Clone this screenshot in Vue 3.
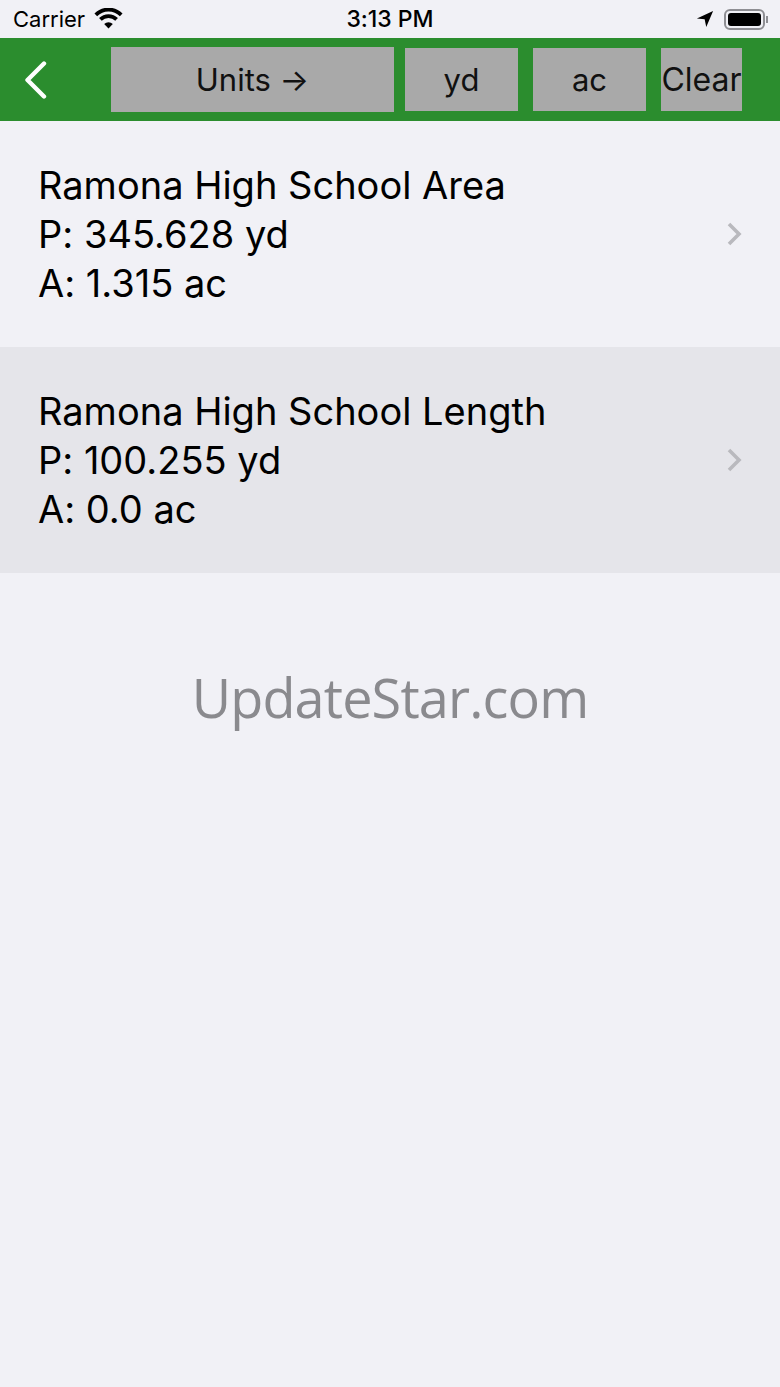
<script setup>
// Rader i listan
const rows = [
  { name: 'Ramona High School Area', p: '345.628 yd', a: '1.315 ac', active: false },
  { name: 'Ramona High School Length', p: '100.255 yd', a: '0.0 ac', active: true },
]
</script>

<template>
  <div class="page">
    <div class="status">
      <div class="status-left">
        <span class="carrier">Carrier</span>
        <svg class="wifi" width="29" height="21" viewBox="0 0 29 21">
          <path d="M1.8 6.8 A18 18 0 0 1 27.2 6.8" fill="none" stroke="#000" stroke-width="3.8" />
          <path d="M6.4 11.4 A11.5 11.5 0 0 1 22.6 11.4" fill="none" stroke="#000" stroke-width="3.8" />
          <path d="M14.5 20.5 L10.2 16 A6 6 0 0 1 18.8 16 Z" fill="#000" />
        </svg>
      </div>
      <span class="time">3:13 PM</span>
      <div class="status-right">
        <svg class="arrow" width="18" height="18" viewBox="0 0 20 20">
          <path d="M19 1 L1 9.4 L9.6 10.4 L11.4 19 Z" fill="#000" />
        </svg>
        <div class="battery"><div class="battery-fill"></div></div>
        <div class="battery-tip"></div>
      </div>
    </div>

    <div class="nav">
      <svg class="back" width="26" height="38" viewBox="0 0 26 38">
        <path d="M21 2.5 L4.5 19 L21 35.5" fill="none" stroke="#fff" stroke-width="4.4" stroke-linecap="round" stroke-linejoin="round" />
      </svg>
      <div class="btn units">Units →</div>
      <div class="btn yd">yd</div>
      <div class="btn ac">ac</div>
      <div class="btn clear">Clear</div>
    </div>

    <div v-for="row in rows" :key="row.name" class="row" :class="{ active: row.active }">
      <div class="row-text">
        <div>{{ row.name }}</div>
        <div>P: {{ row.p }}</div>
        <div>A: {{ row.a }}</div>
      </div>
      <svg class="chevron" width="16" height="26" viewBox="0 0 16 26">
        <path d="M3 3 L13 13 L3 23" fill="none" stroke="#b9b9be" stroke-width="3.6" />
      </svg>
    </div>

    <div class="watermark">UpdateStar.com</div>
  </div>
</template>

<style>
html, body {
  margin: 0;
  background: #f1f1f6;
}
</style>

<style scoped>
.page {
  width: 780px;
  height: 1387px;
  overflow: hidden;
  background: #f1f1f6;
  font-family: Inter, "Liberation Sans", sans-serif;
  font-feature-settings: "calt" 0;
  color: #000;
}
.status {
  height: 38px;
  display: grid;
  grid-template-columns: 1fr auto 1fr;
  align-items: center;
}
.status-left {
  display: flex;
  align-items: center;
  gap: 9px;
  padding-left: 13px;
}
.carrier {
  font-size: 22px;
}
.wifi {
  margin-top: -1px;
}
.time {
  font-weight: 500;
  font-size: 23px;
}
.status-right {
  display: flex;
  align-items: center;
  justify-content: flex-end;
  padding-right: 12px;
}
.arrow {
  margin-right: 10px;
}
.battery {
  width: 41px;
  height: 21px;
  border: 2px solid #8e8e93;
  border-radius: 6px;
  padding: 2px;
  box-sizing: border-box;
}
.battery-fill {
  width: 100%;
  height: 100%;
  background: #000;
  border-radius: 3px;
}
.battery-tip {
  width: 2px;
  height: 7px;
  margin-left: 1px;
  background: #8e8e93;
}
.nav {
  height: 83px;
  background: #2b8d2e;
  display: flex;
  align-items: center;
  padding-left: 23px;
  font-size: 31px;
}
.back {
  margin-right: 62px;
}
.btn {
  background: #a9a9a9;
  height: 63px;
  display: flex;
  align-items: center;
  justify-content: center;
  color: #111;
}
.units {
  width: 283px;
  height: 65px;
  margin-right: 11px;
}
.yd {
  width: 113px;
  margin-right: 15px;
}
.ac {
  width: 113px;
  margin-right: 15px;
}
.clear {
  width: 81px;
  font-size: 32px;
}
.row {
  height: 226px;
  display: flex;
  align-items: center;
  justify-content: space-between;
  padding: 0 38px 0 38px;
  box-sizing: border-box;
  font-size: 38px;
  line-height: 49px;
}
.row.active {
  background: #e5e5ea;
}
.watermark {
  margin-top: 89px;
  text-align: center;
  font-family: "Open Sans", sans-serif;
  font-size: 54px;
  letter-spacing: -0.85px;
  line-height: 70px;
  color: #8a8a8e;
}
</style>
